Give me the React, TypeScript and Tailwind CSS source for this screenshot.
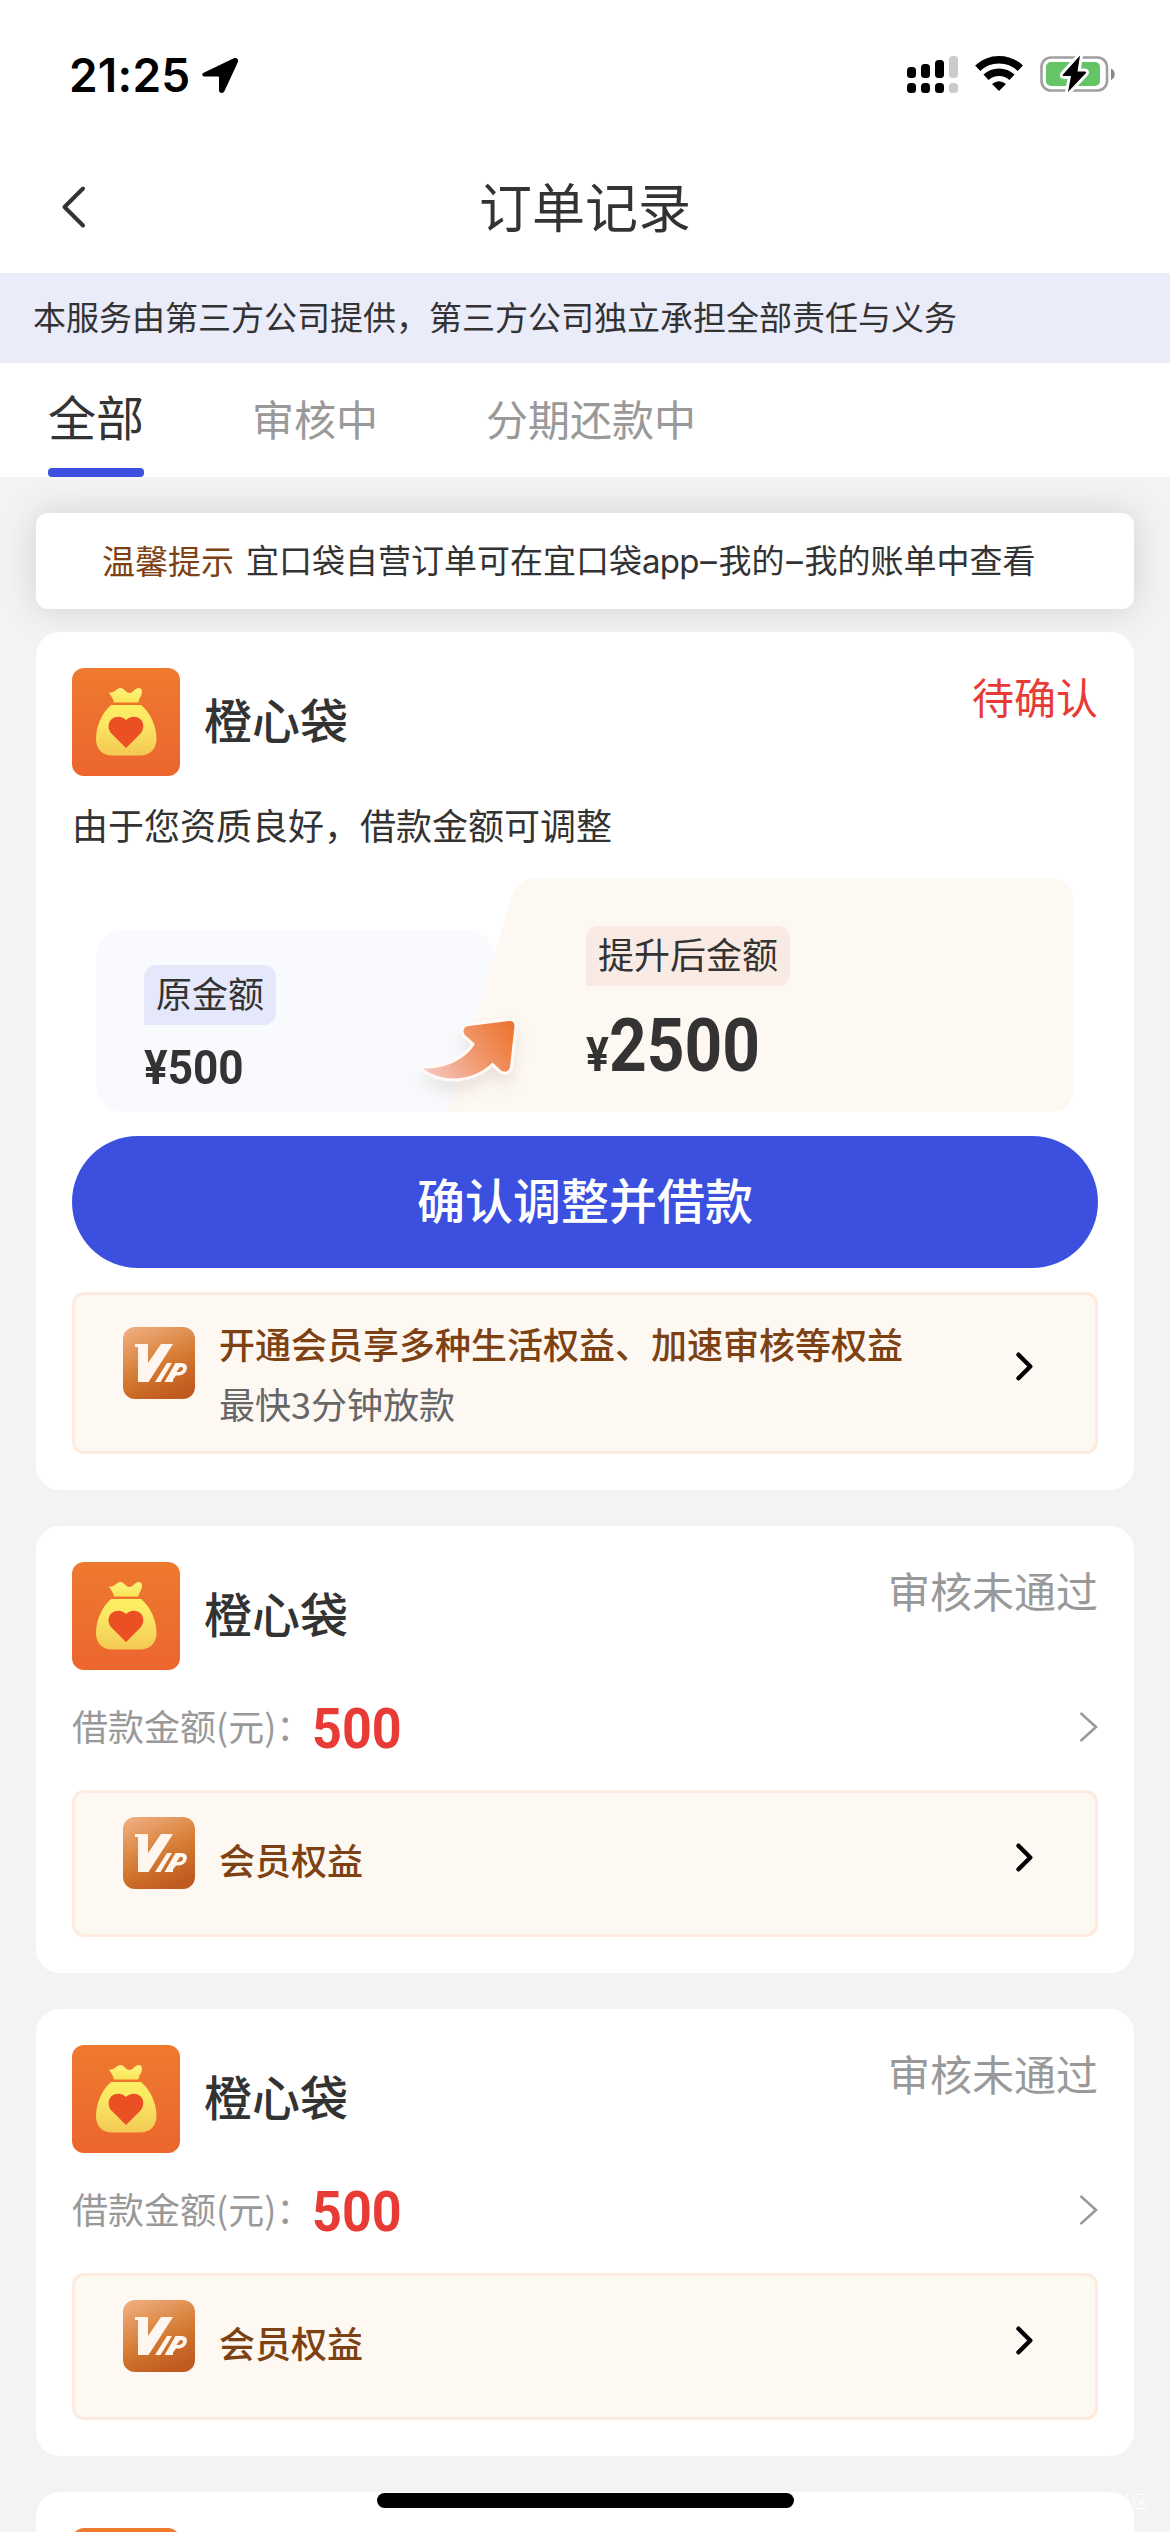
import React from "react";

const PouchIcon = () => (
  <svg className="size-[108px] shrink-0 rounded-xl" viewBox="0 0 108 108">
    <defs>
      <linearGradient id="pouch-bg" x1="0" y1="0" x2="0" y2="1">
        <stop offset="0" stopColor="#ee7a2e" />
        <stop offset="1" stopColor="#ec652e" />
      </linearGradient>
      <linearGradient id="pouch-fill" x1="0" y1="0" x2="0" y2="1">
        <stop offset="0" stopColor="#fcee62" />
        <stop offset="0.35" stopColor="#fbe865" />
        <stop offset="1" stopColor="#f3c852" />
      </linearGradient>
      <linearGradient id="pouch-top" x1="0" y1="0" x2="0" y2="1">
        <stop offset="0" stopColor="#fdf47e" />
        <stop offset="1" stopColor="#fbe456" />
      </linearGradient>
    </defs>
    <rect width="108" height="108" fill="url(#pouch-bg)" />
    <path d="M37 24.5 C42 25.5 45 20 48.500 20 C52 20 54 25 57.500 25 C61 25 63 20 67 20 C70 20 71 24 69 28 C67 31 67 33 66 34.500 H42 C41 31 40 29 37.500 25.500 Z" fill="url(#pouch-top)" />
    <path d="M39 37 H69 C78 44 84.500 58 84.500 71 C84.500 81 78 87.500 68 87.500 H40 C30 87.500 24 81 24 71 C24 58 30 45 39 37 Z" fill="url(#pouch-fill)" />
    <path d="M54 80 L39.500 65.500 C34 59.500 36.500 49 46 48.700 C49.500 48.600 52 50 54 52 C56 50 58.500 48.600 62 48.700 C71.500 49 74 59.500 68.500 65.500 Z" fill="#ea5024" />
  </svg>
);

const VipIcon = () => (
  <svg className="size-[72px] shrink-0 rounded-xl" viewBox="0 0 72 72">
    <defs>
      <linearGradient id="vip-bg" x1="0.2" y1="0" x2="0.65" y2="1">
        <stop offset="0" stopColor="#eeab7b" />
        <stop offset="0.5" stopColor="#d78039" />
        <stop offset="0.75" stopColor="#cb6b28" />
        <stop offset="1" stopColor="#c05a20" />
      </linearGradient>
    </defs>
    <rect width="72" height="72" fill="url(#vip-bg)" />
    <g fill="#fef6ef">
      <path d="M12 17 H25 V36 L38 17 H50 L25.500 55 H15 V20 H12 Z" />
      <path d="M44 36 H49 L37.500 55 H32 Z" />
      <path fillRule="evenodd" d="M52.500 36 H58 C63 36 65 39 63.500 43 C62 47 58 49 53 48.500 L50 52.500 V55 H41.500 Z M57 40 L53.500 45 C57 45.500 59.500 44 60 42 C60.300 40.500 59 40 57 40 Z" />
    </g>
  </svg>
);

const ArrowRight = () => (
  <svg className="h-[30px] w-[18px] shrink-0" viewBox="0 0 18 30" fill="none">
    <path d="M2.500 2.700 L14.300 14.500 L2.500 26.300" stroke="#000" strokeWidth="4.400" strokeLinecap="round" strokeLinejoin="round" />
  </svg>
);

const StatusBar = () => (
  <div className="flex h-[141px] items-start justify-between pr-[54px] pl-[69px]">
    <div className="mt-[47px] flex h-[56px] items-center gap-3">
      <span className="w-[121px] font-['Inter'] text-[46px] leading-[56px] font-semibold tracking-[0.2px] text-black">21:25</span>
      <svg className="h-[36px] w-[37px]" viewBox="0 0 37 36">
        <path d="M2.200 15.500 L31.800 1.300 C34.600 0 37 2.200 35.800 5.200 L22.500 34 C21.200 37 17 36.500 17 33 V20.500 Q17 19.500 16 19.500 H3.500 C-0.200 19.500 -1 17 2.200 15.500 Z" />
      </svg>
    </div>
    <svg className="mt-[52px] h-[44px] w-[210px]" viewBox="906 52 210 44">
      <g fill="#000">
        <rect x="907" y="67" width="9" height="11" rx="3.500" />
        <rect x="921" y="64" width="9" height="14" rx="3.500" />
        <rect x="935" y="60" width="9" height="18" rx="3.500" />
        <rect x="907" y="83" width="9" height="10" rx="3.500" />
        <rect x="921" y="83" width="9" height="10" rx="3.500" />
        <rect x="935" y="83" width="9" height="10" rx="3.500" />
      </g>
      <g fill="#cbcbcb">
        <rect x="949" y="56" width="9" height="22" rx="3.500" />
        <rect x="949" y="83" width="9" height="10" rx="3.500" />
      </g>
      <path d="M977.700 68.200 A31 31 0 0 1 1020.300 68.200" fill="none" stroke="#000" strokeWidth="7.500" />
      <path d="M986 77.300 A19 19 0 0 1 1012 77.300" fill="none" stroke="#000" strokeWidth="7.500" />
      <path d="M999 91 L992 84 Q999 78.500 1006 84 Z" />
      <rect x="1041.500" y="57.500" width="65.500" height="33" rx="9.500" fill="none" stroke="#a0a0a0" strokeWidth="2.600" />
      <path d="M1111 68.500 C1116 70.500 1116 78 1111 80 Z" fill="#8b8b8b" />
      <rect x="1046" y="62" width="54" height="24" rx="5" fill="#65c466" />
      <path d="M1080 55.500 L1063 74.500 Q1062 76 1064 76 H1071 L1068 92 L1085.500 73.500 Q1087 71.500 1084.500 71.500 H1077.500 Z" fill="#000" stroke="#fff" strokeWidth="6" strokeLinejoin="round" paintOrder="stroke" />
    </svg>
  </div>
);

const Header = () => (
  <div className="grid h-[132px] grid-cols-[200px_1fr_200px] items-center">
    <svg className="ml-[60px] h-[46px] w-[28px]" viewBox="0 0 28 46" fill="none">
      <path d="M23 4.500 L4.500 23 L23 41.500" stroke="#333" strokeWidth="4" strokeLinecap="round" strokeLinejoin="round" />
    </svg>
    <h1 className="-mt-1 text-center text-[53px] leading-[72px] font-normal">订单记录</h1>
  </div>
);

const VipBanner = ({ title, detail }: { title: string; detail?: string }) => (
  <div
    className={
      detail
        ? "flex h-[162px] items-start rounded-xl border-[3px] border-[#fcebde] bg-[#fdf8f2] pt-8 pr-[61px] pl-12"
        : "flex h-[147px] items-start rounded-xl border-[3px] border-[#fcebde] bg-[#fdf8f2] pt-6 pr-[61px] pl-12"
    }
  >
    <VipIcon />
    <div className={detail ? "-mt-[14px] ml-6 flex-1 leading-[60px]" : "mt-[12px] ml-6 flex-1 leading-[60px]"}>
      <p className="font-medium text-[#7e4113]">{title}</p>
      {detail && <p className="text-[#666]">{detail}</p>}
    </div>
    <div className={detail ? "mt-[25px]" : "mt-[26px]"}>
      <ArrowRight />
    </div>
  </div>
);

const CardHead = ({ status, pending }: { status: string; pending?: boolean }) => (
  <div className="flex h-[108px] items-start">
    <PouchIcon />
    <h2 className="mt-[14px] ml-6 text-[48px] leading-[72px] font-medium">橙心袋</h2>
    <span
      className={
        pending
          ? "ml-auto text-[42px] leading-[56px] text-[#e93b35]"
          : "ml-auto text-[42px] leading-[56px] text-[#999]"
      }
    >
      {status}
    </span>
  </div>
);

const AmountPanel = () => (
  <div className="relative mt-[27px] ml-[24px] h-[234px] w-[978px]">
    <svg className="absolute inset-0 size-full" viewBox="96 878 978 234">
      <defs>
        <linearGradient id="arrow-fill" x1="430" y1="1084" x2="512" y2="1026" gradientUnits="userSpaceOnUse">
          <stop offset="0" stopColor="#f5c9c4" />
          <stop offset="0.55" stopColor="#f1976c" />
          <stop offset="1" stopColor="#ed7530" />
        </linearGradient>
        <filter id="arrow-shadow" x="-40%" y="-40%" width="180%" height="200%">
          <feDropShadow dx="0" dy="10" stdDeviation="7" floodColor="#8b7468" floodOpacity="0.16" />
        </filter>
      </defs>
      <rect x="96.500" y="930" width="397" height="182" rx="26" fill="#f9fafd" />
      <path d="M447 1112 L511 900 Q517 878 540 878 H1048 Q1074 878 1074 904 V1086 Q1074 1112 1048 1112 Z" fill="#fdf8f2" />
      <path
        filter="url(#arrow-shadow)"
        d="M423 1068.500 C444 1069 464 1061 475 1044 L465 1035 C462 1031 464 1026 469 1026 L509 1021 C512.500 1020.500 514.500 1022.500 514.500 1026 L510 1067 C509 1072 504 1073 500.500 1070 L492.500 1062.500 C474 1081 443 1084 423 1068.500 Z"
        fill="url(#arrow-fill)"
        stroke="#fffaf6"
        strokeWidth="6"
        strokeLinejoin="round"
        paintOrder="stroke"
      />
    </svg>
    <div className="relative grid h-full grid-cols-[442px_1fr] pl-12">
      <div className="flex flex-col items-start pt-[87px]">
        <span className="h-[60px] rounded-xl rounded-bl-none bg-[#e5e8fa] px-3 leading-[55px]">原金额</span>
        <b className="mt-[15px] origin-left scale-x-[0.9] font-['Roboto'] text-[49px] leading-[56px] font-bold">¥500</b>
      </div>
      <div className="flex flex-col items-start pt-[48px]">
        <span className="h-[60px] rounded-xl rounded-bl-none bg-[#f9ebe3] px-3 leading-[55px]">提升后金额</span>
        <b className="mt-[18px] origin-left scale-x-[0.89] font-['Roboto'] text-[74px] leading-[84px] font-bold">
          <span className="text-[48px]">¥</span>2500
        </b>
      </div>
    </div>
  </div>
);

const RejectedCard = () => (
  <section className="h-[447px] shrink-0 rounded-3xl bg-white p-9">
    <CardHead status="审核未通过" />
    <div className="mt-[24px] flex h-[66px] items-center">
      <span className="-mt-1 text-[#999]">借款金额(元)：</span>
      <b className="mt-[3px] origin-left scale-x-[0.93] font-['Roboto'] text-[56px] leading-[66px] font-bold text-[#e93b35]">500</b>
      <svg className="ml-auto h-[30px] w-[18px]" viewBox="0 0 18 30" fill="none">
        <path d="M0.500 1 L16 15 L0.500 29" stroke="#999" strokeWidth="2.600" />
      </svg>
    </div>
    <div className="mt-[30px]">
      <VipBanner title="会员权益" />
    </div>
  </section>
);

export default function App() {
  return (
    <div className="relative flex h-[2532px] w-[1170px] flex-col overflow-hidden bg-[#f3f3f3] font-['Noto_Sans_CJK_SC',sans-serif] text-[36px] text-[#333]">
      <div className="bg-white">
        <StatusBar />
        <Header />
      </div>
      <div className="h-[90px] shrink-0 bg-[#ebecfa] pl-[33px] text-[33px] leading-[86px] whitespace-nowrap">
        本服务由第三方公司提供，第三方公司独立承担全部责任与义务
      </div>
      <nav className="flex h-[114px] shrink-0 gap-[108px] bg-white pl-12 text-[42px] text-[#999]">
        <div className="flex flex-col justify-between text-[48px] text-[#333]">
          <span className="leading-[104px]">全部</span>
          <i className="-mt-1 h-[9px] shrink-0 rounded-[4px] bg-[#3c50e0]" />
        </div>
        <span className="leading-[109px]">审核中</span>
        <span className="leading-[109px]">分期还款中</span>
      </nav>
      <main className="flex flex-col px-9 pt-9">
        <div className="flex h-24 shrink-0 items-center gap-3 rounded-xl bg-white pl-[66px] text-[33px] leading-[48px] whitespace-nowrap shadow-[0_0_36px_rgba(0,0,0,0.14)]">
          <span className="-mt-[3px] text-[#7e4113]">温馨提示</span>
          <span className="-mt-[3px]">
            宜口袋自营订单可在宜口袋
            <span className="font-['Inter'] tracking-[-0.8px]">app</span>
            <span className="inline-block w-[20px] text-center font-['Inter']">–</span>
            我的
            <span className="inline-block w-[20px] text-center font-['Inter']">–</span>
            我的账单中查看
          </span>
        </div>
        <div className="relative mt-[23px] flex flex-col gap-9">
          <section className="h-[858px] shrink-0 rounded-3xl bg-white p-9">
            <CardHead status="待确认" pending />
            <p className="mt-[21px] leading-[54px]">由于您资质良好，借款金额可调整</p>
            <AmountPanel />
            <button className="mt-6 block h-[132px] w-full rounded-full bg-[#3c50e0] pb-[9px] text-[48px] font-medium text-white">
              确认调整并借款
            </button>
            <div className="mt-6">
              <VipBanner title="开通会员享多种生活权益、加速审核等权益" detail="最快3分钟放款" />
            </div>
          </section>
          <RejectedCard />
          <RejectedCard />
          <section className="h-[447px] shrink-0 rounded-3xl bg-white p-9">
            <PouchIcon />
          </section>
        </div>
      </main>
      <div className="absolute top-[2493px] left-[377px] h-[15px] w-[417px] rounded-full bg-black" />
      <span className="absolute top-[2490px] left-[1115px] text-[17px] leading-[22px] font-light text-white">社区</span>
    </div>
  );
}
